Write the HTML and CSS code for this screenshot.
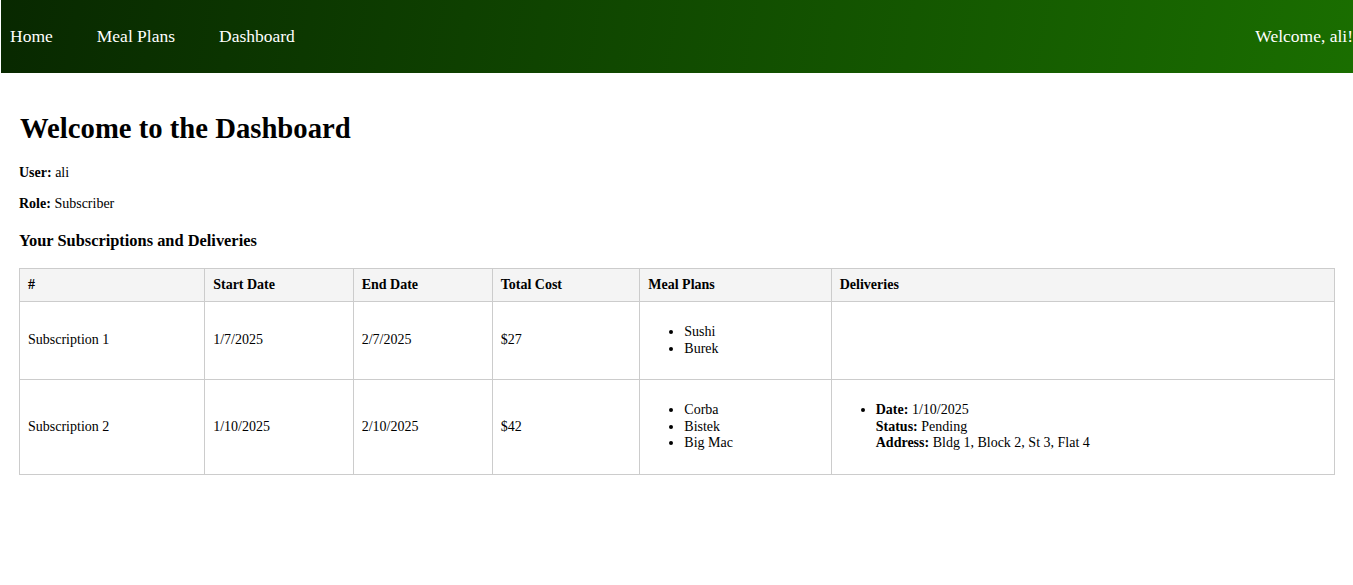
FILE: index.html
```html
<!DOCTYPE html>
<html>
<head>
<meta charset="utf-8">
<title>Dashboard</title>
<link rel="stylesheet" href="styles.css">
</head>
<body>
<nav class="navbar">
  <div class="nav-links">
    <a href="#" class="nav-link">Home</a>
    <a href="#" class="nav-link">Meal Plans</a>
    <a href="#" class="nav-link">Dashboard</a>
  </div>
  <span class="nav-welcome">Welcome, ali!</span>
</nav>
<main class="container">
  <h1 class="title">Welcome to the Dashboard</h1>
  <p class="info"><strong>User:</strong> ali</p>
  <p class="info"><strong>Role:</strong> Subscriber</p>
  <h3 class="subtitle">Your Subscriptions and Deliveries</h3>
  <table class="subs">
    <thead>
      <tr>
        <th>#</th>
        <th>Start Date</th>
        <th>End Date</th>
        <th>Total Cost</th>
        <th>Meal Plans</th>
        <th>Deliveries</th>
      </tr>
    </thead>
    <tbody>
      <tr>
        <td>Subscription 1</td>
        <td>1/7/2025</td>
        <td>2/7/2025</td>
        <td>$27</td>
        <td><ul class="list"><li>Sushi</li><li>Burek</li></ul></td>
        <td></td>
      </tr>
      <tr>
        <td>Subscription 2</td>
        <td>1/10/2025</td>
        <td>2/10/2025</td>
        <td>$42</td>
        <td><ul class="list"><li>Corba</li><li>Bistek</li><li>Big Mac</li></ul></td>
        <td><ul class="list"><li><strong>Date:</strong> 1/10/2025<br><strong>Status:</strong> Pending<br><strong>Address:</strong> Bldg 1, Block 2, St 3, Flat 4</li></ul></td>
      </tr>
    </tbody>
  </table>
</main>
</body>
</html>
```
FILE: styles.css
```css
html, body {
  margin: 0;
  padding: 0;
}
body {
  font-family: "Liberation Serif", "Times New Roman", serif;
  font-size: 14px;
  line-height: 17px;
  color: #000;
  background: #fff;
}
.navbar {
  display: flex;
  justify-content: space-between;
  align-items: center;
  height: 71px;
  padding-bottom: 2px;
  margin-left: 1px;
  padding-left: 9px;
  overflow: hidden;
  background: linear-gradient(100deg, #082800 0%, #0f4400 40%, #1a6e00 100%);
}
.nav-links {
  display: flex;
  gap: 44px;
}
.nav-link,
.nav-welcome {
  color: #fff;
  text-decoration: none;
  font-size: 17.5px;
  line-height: 20px;
  white-space: nowrap;
}
.container {
  padding: 20px 18px 20px 19px;
}
.title {
  font-size: 28.7px;
  line-height: 33px;
  margin: 19px 0 19px 1px;
}
.info {
  margin: 14px 0;
}
.subtitle {
  font-size: 16.4px;
  line-height: 19px;
  margin: 19px 0 18px;
}
.subs {
  width: 100%;
  border-collapse: collapse;
  margin-top: 0;
}
.subs th,
.subs td {
  border: 1px solid #ccc;
  padding: 8px;
  text-align: left;
  vertical-align: middle;
  line-height: 16.6px;
}
.subs th {
  background: #f4f4f4;
  font-weight: bold;
  line-height: 16px;
}
.list {
  margin: 14px 0;
  padding-left: 36px;
}
```
